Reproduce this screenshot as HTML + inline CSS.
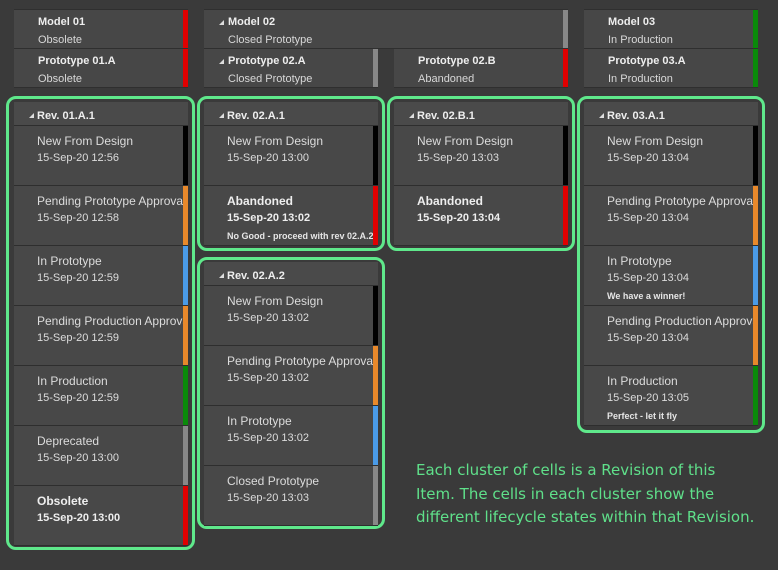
<!DOCTYPE html><html><head><style>
body{margin:0;width:778px;height:570px;background:#3a3a3a;position:relative;overflow:hidden;font-family:"Liberation Sans",sans-serif;color:#ddd}
.top{position:absolute;height:38px;background:#474747;border-top:1px solid #2f2f2f;border-bottom:1px solid #2f2f2f;overflow:hidden}
.top b{position:absolute;left:24px;top:6px;font-size:11px;color:#eee}
.top span{position:absolute;left:24px;top:24px;font-size:11px;color:#d8d8d8}
.bar{position:absolute;right:0;top:0;bottom:0;width:5px}
.fr{position:absolute;border:3px solid #5fe88b;border-radius:10px;box-sizing:border-box}
.hd{position:absolute;width:174px;height:23px;background:#4a4a4a;border-bottom:1px solid #2e2e2e}
.hd b{position:absolute;left:23px;top:8px;font-size:11px;color:#eee}
.tri{position:absolute;left:15px;top:11px;width:0;height:0;border-left:5px solid transparent;border-bottom:5px solid #ddd}
.top .tri{top:10px}
.c{position:absolute;width:174px;height:59px;background:#484848;border-bottom:1px solid #2e2e2e;overflow:hidden}
.c .t{position:absolute;left:23px;top:8px;font-size:12px;white-space:nowrap;color:#dcdcdc}
.c .d{position:absolute;left:23px;top:26px;font-size:11px;color:#dcdcdc}
.c .n{position:absolute;left:23px;top:45px;font-size:9px;font-weight:bold;white-space:nowrap;color:#e6e6e6}
.c.bd .t,.c.bd .d{font-weight:bold;color:#eee}
.k{background:#000}.o{background:#e8892b}.bl{background:#4a9be8}.g{background:#0a8a0a}.gr{background:#888}.r{background:#e00000}
.note{position:absolute;left:416px;top:459px;line-height:23.5px;color:#5fe08a;font-family:"DejaVu Sans","Liberation Sans",sans-serif;font-size:15px}
</style></head><body>
<div class="top" style="left:14px;top:9px;width:174px"><b>Model 01</b><span>Obsolete</span><div class="bar r"></div></div>
<div class="top" style="left:14px;top:48px;width:174px"><b>Prototype 01.A</b><span>Obsolete</span><div class="bar r"></div></div>
<div class="top" style="left:204px;top:9px;width:364px"><div class="tri"></div><b>Model 02</b><span>Closed Prototype</span><div class="bar gr"></div></div>
<div class="top" style="left:204px;top:48px;width:174px"><div class="tri"></div><b>Prototype 02.A</b><span>Closed Prototype</span><div class="bar gr"></div></div>
<div class="top" style="left:394px;top:48px;width:174px"><b>Prototype 02.B</b><span>Abandoned</span><div class="bar r"></div></div>
<div class="top" style="left:584px;top:9px;width:174px"><b>Model 03</b><span>In Production</span><div class="bar g"></div></div>
<div class="top" style="left:584px;top:48px;width:174px"><b>Prototype 03.A</b><span>In Production</span><div class="bar g"></div></div>

<div class="fr" style="left:6px;top:96px;width:189px;height:454px"></div>
<div class="hd" style="left:14px;top:102px"><div class="tri"></div><b>Rev. 01.A.1</b></div>
<div class="c" style="left:14px;top:126px"><div class="t">New From Design</div><div class="d">15-Sep-20 12:56</div><div class="bar k"></div></div>
<div class="c" style="left:14px;top:186px"><div class="t">Pending Prototype Approval</div><div class="d">15-Sep-20 12:58</div><div class="bar o"></div></div>
<div class="c" style="left:14px;top:246px"><div class="t">In Prototype</div><div class="d">15-Sep-20 12:59</div><div class="bar bl"></div></div>
<div class="c" style="left:14px;top:306px"><div class="t">Pending Production Approval</div><div class="d">15-Sep-20 12:59</div><div class="bar o"></div></div>
<div class="c" style="left:14px;top:366px"><div class="t">In Production</div><div class="d">15-Sep-20 12:59</div><div class="bar g"></div></div>
<div class="c" style="left:14px;top:426px"><div class="t">Deprecated</div><div class="d">15-Sep-20 13:00</div><div class="bar gr"></div></div>
<div class="c bd" style="left:14px;top:486px"><div class="t">Obsolete</div><div class="d">15-Sep-20 13:00</div><div class="bar r"></div></div>

<div class="fr" style="left:197px;top:96px;width:188px;height:155px"></div>
<div class="hd" style="left:204px;top:102px"><div class="tri"></div><b>Rev. 02.A.1</b></div>
<div class="c" style="left:204px;top:126px"><div class="t">New From Design</div><div class="d">15-Sep-20 13:00</div><div class="bar k"></div></div>
<div class="c bd" style="left:204px;top:186px"><div class="t">Abandoned</div><div class="d">15-Sep-20 13:02</div><div class="n">No Good - proceed with rev 02.A.2</div><div class="bar r"></div></div>

<div class="fr" style="left:197px;top:257px;width:188px;height:272px"></div>
<div class="hd" style="left:204px;top:262px"><div class="tri"></div><b>Rev. 02.A.2</b></div>
<div class="c" style="left:204px;top:286px"><div class="t">New From Design</div><div class="d">15-Sep-20 13:02</div><div class="bar k"></div></div>
<div class="c" style="left:204px;top:346px"><div class="t">Pending Prototype Approval</div><div class="d">15-Sep-20 13:02</div><div class="bar o"></div></div>
<div class="c" style="left:204px;top:406px"><div class="t">In Prototype</div><div class="d">15-Sep-20 13:02</div><div class="bar bl"></div></div>
<div class="c" style="left:204px;top:466px"><div class="t">Closed Prototype</div><div class="d">15-Sep-20 13:03</div><div class="bar gr"></div></div>

<div class="fr" style="left:387px;top:96px;width:188px;height:155px"></div>
<div class="hd" style="left:394px;top:102px"><div class="tri"></div><b>Rev. 02.B.1</b></div>
<div class="c" style="left:394px;top:126px"><div class="t">New From Design</div><div class="d">15-Sep-20 13:03</div><div class="bar k"></div></div>
<div class="c bd" style="left:394px;top:186px"><div class="t">Abandoned</div><div class="d">15-Sep-20 13:04</div><div class="bar r"></div></div>

<div class="fr" style="left:577px;top:96px;width:188px;height:337px"></div>
<div class="hd" style="left:584px;top:102px"><div class="tri"></div><b>Rev. 03.A.1</b></div>
<div class="c" style="left:584px;top:126px"><div class="t">New From Design</div><div class="d">15-Sep-20 13:04</div><div class="bar k"></div></div>
<div class="c" style="left:584px;top:186px"><div class="t">Pending Prototype Approval</div><div class="d">15-Sep-20 13:04</div><div class="bar o"></div></div>
<div class="c" style="left:584px;top:246px"><div class="t">In Prototype</div><div class="d">15-Sep-20 13:04</div><div class="n">We have a winner!</div><div class="bar bl"></div></div>
<div class="c" style="left:584px;top:306px"><div class="t">Pending Production Approval</div><div class="d">15-Sep-20 13:04</div><div class="bar o"></div></div>
<div class="c" style="left:584px;top:366px"><div class="t">In Production</div><div class="d">15-Sep-20 13:05</div><div class="n">Perfect - let it fly</div><div class="bar g"></div></div>

<div class="note">Each cluster of cells is a Revision of this<br>Item. The cells in each cluster show the<br>different lifecycle states within that Revision.</div>
</body></html>
